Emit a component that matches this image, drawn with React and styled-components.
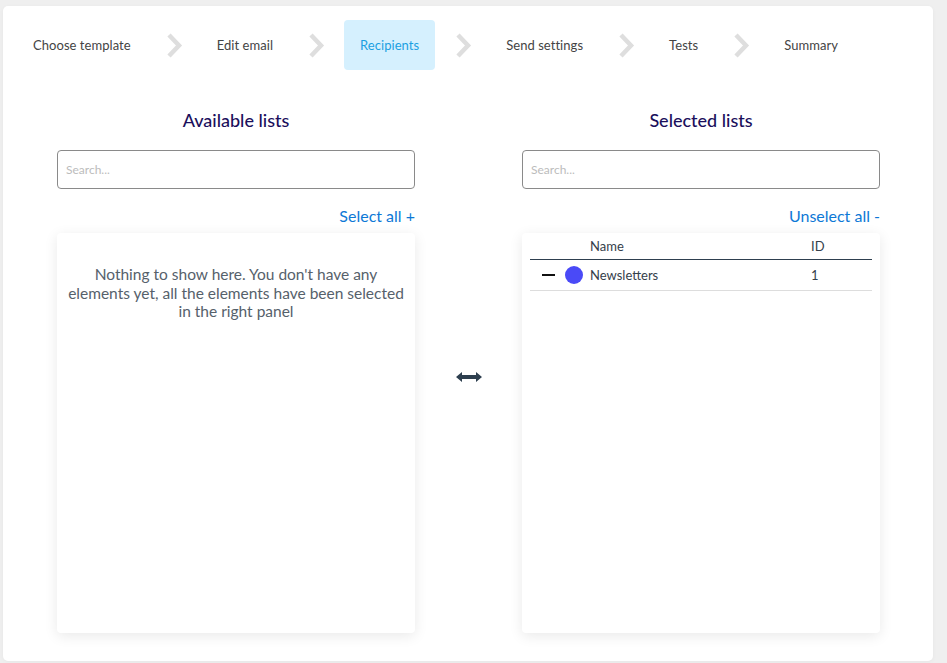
import React from 'react';
import styled, { createGlobalStyle } from 'styled-components';

const GlobalStyle = createGlobalStyle`
  html, body {
    margin: 0;
    padding: 0;
    background: #efefef;
    font-family: Lato, "Open Sans", Arial, sans-serif;
  }
  * { box-sizing: border-box; }
`;

const steps = ['Choose template', 'Edit email', 'Recipients', 'Send settings', 'Tests', 'Summary'];

const Chevron = () => (
  <ChevronIcon width="17" height="25" viewBox="0 0 17 25">
    <polyline points="3,2 13,12.5 3,23" fill="none" stroke="#dedede" strokeWidth="4.5" />
  </ChevronIcon>
);

const SwapArrow = () => (
  <svg width="28" height="12" viewBox="0 0 28 12">
    <path d="M1 6 L7 1 L7 4 L21 4 L21 1 L27 6 L21 11 L21 8 L7 8 L7 11 Z" fill="#2e3f4f" />
  </svg>
);

class App extends React.Component {
  render() {
    return (
      <Page>
        <GlobalStyle />
        <Card>
          <Stepper>
            {steps.map((s, i) => (
              <React.Fragment key={s}>
                {i > 0 && <Chevron />}
                <Step active={s === 'Recipients'}>{s}</Step>
              </React.Fragment>
            ))}
          </Stepper>

          <Body>
            <Column>
              <Title>Available lists</Title>
              <SearchInput placeholder="Search..." />
              <ActionLink>Select all +</ActionLink>
              <Panel>
                <EmptyText>
                  Nothing to show here. You don't have any elements yet, all the elements have been
                  selected in the right panel
                </EmptyText>
              </Panel>
            </Column>

            <Middle>
              <SwapArrow />
            </Middle>

            <Column>
              <Title>Selected lists</Title>
              <SearchInput placeholder="Search..." />
              <ActionLink>Unselect all -</ActionLink>
              <Panel table>
                <HeadRow>
                  <span />
                  <span>Name</span>
                  <span>ID</span>
                </HeadRow>
                <Row>
                  <RowMarks>
                    <Dash />
                    <Dot color="#4a4af7" />
                  </RowMarks>
                  <span>Newsletters</span>
                  <span>1</span>
                </Row>
              </Panel>
            </Column>
          </Body>
        </Card>
      </Page>
    );
  }
}

const Page = styled.div`
  padding: 6px 14px 2px 3px;
  min-height: 663px;
`;

const Card = styled.div`
  background: #fff;
  border-radius: 5px;
  padding: 14px 14px 28px;
  box-shadow: 0 1px 4px rgba(0, 0, 0, 0.04);
`;

const Stepper = styled.div`
  display: flex;
  align-items: center;
  padding-left: 1px;
`;

const ChevronIcon = styled.svg`
  margin: 0 19px 0 20px;
  flex-shrink: 0;
`;

const Step = styled.div`
  height: 50px;
  padding: 0 ${(p) => (p.active ? '16px' : '15px')};
  display: flex;
  align-items: center;
  border-radius: 4px;
  font-size: 13px;
  letter-spacing: 0.05px;
  color: ${(p) => (p.active ? '#1ba0e2' : '#444')};
  background: ${(p) => (p.active ? '#d5f0fe' : 'transparent')};
`;

const Body = styled.div`
  display: grid;
  grid-template-columns: 358px 1fr 358px;
  padding: 0 39px 0 40px;
  margin-top: 39px;
`;

const Column = styled.div`
  display: flex;
  flex-direction: column;
`;

const Title = styled.h2`
  margin: 0;
  text-align: center;
  font-size: 18px;
  line-height: 22px;
  font-weight: 500;
  color: #1b0f5c;
`;

const SearchInput = styled.input`
  margin-top: 19px;
  height: 39px;
  border: 1px solid #8a8a8a;
  border-radius: 4px;
  padding: 0 8px;
  font-family: inherit;
  font-size: 12px;
  color: #333;
  outline: none;
  &::placeholder {
    color: #bcbcbc;
  }
`;

const ActionLink = styled.a`
  margin-top: 17px;
  align-self: flex-end;
  font-size: 16px;
  line-height: 19px;
  color: #0d78d6;
  cursor: pointer;
`;

const Panel = styled.div`
  margin-top: 8px;
  height: 400px;
  background: #fff;
  border-radius: 4px;
  box-shadow: 0 3px 14px rgba(0, 0, 0, 0.09);
  padding: ${(p) => (p.table ? '0 8px' : '32px 7px')};
`;

const EmptyText = styled.p`
  margin: 0;
  text-align: center;
  font-size: 15.5px;
  line-height: 18.5px;
  color: #56616b;
`;

const Middle = styled.div`
  display: flex;
  align-items: center;
  justify-content: center;
  padding-top: 12px;
`;

const HeadRow = styled.div`
  display: grid;
  grid-template-columns: 60px 1fr 61px;
  align-items: center;
  height: 27px;
  border-bottom: 1px solid #2e3f4f;
  font-size: 13px;
  color: #34404a;
`;

const Row = styled(HeadRow)`
  height: 31px;
  border-bottom: 1px solid #dddddd;
`;

const RowMarks = styled.span`
  display: flex;
  align-items: center;
  padding-left: 12px;
  gap: 10px;
`;

const Dash = styled.span`
  width: 13px;
  height: 2px;
  background: #111;
`;

const Dot = styled.span`
  width: 18px;
  height: 18px;
  border-radius: 50%;
  background: ${(p) => p.color};
`;

export default App;
